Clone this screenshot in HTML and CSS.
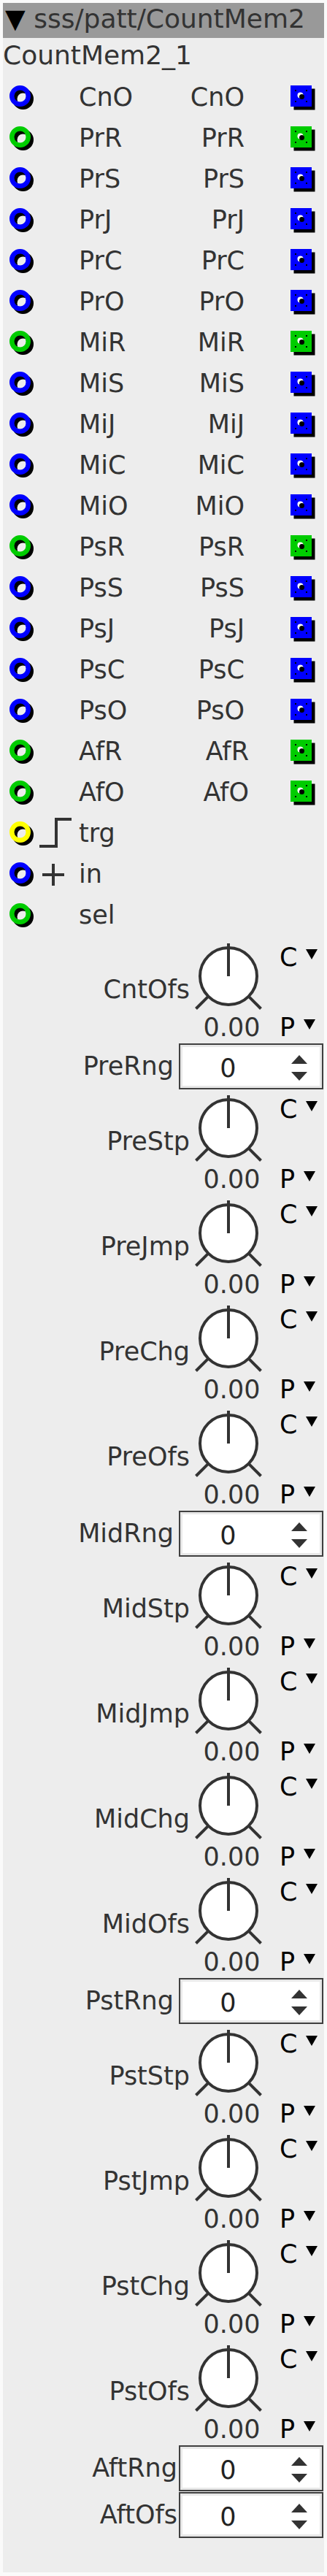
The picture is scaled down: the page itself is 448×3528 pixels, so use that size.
FILE: index.html
```html
<!DOCTYPE html>
<html>
<head>
<meta charset="utf-8">
<link rel="stylesheet" href="styles.css">
</head>
<body>
<div class="panel">
  <div class="hdr"><span class="hdr-tri">▼</span> sss/patt/CountMem2</div>
  <div class="title">CountMem2_1</div>
  <div class="ports">
    <div class="port c-b"><svg class="ring" viewBox="0 0 34 34"><circle class="sh" cx="18.5" cy="18.5" r="11.25"/><circle class="fg" cx="14.5" cy="14.5" r="11.25"/></svg><span class="sub"></span><span class="pl">CnO</span><span class="pr">CnO</span><svg class="sq" viewBox="0 0 34 34"><rect class="sh" x="4.5" y="4.5" width="29" height="29"/><rect class="fg" width="29" height="29"/><rect class="d" x="6" y="6" width="2" height="2"/><rect class="d" x="21" y="6" width="2" height="2"/><rect class="d" x="6" y="21" width="2" height="2"/><rect class="d" x="21" y="21" width="2" height="2"/><circle class="w" cx="13.5" cy="13.5" r="4"/><circle class="k" cx="15.5" cy="15.5" r="3.5"/></svg></div>
    <div class="port c-g"><svg class="ring" viewBox="0 0 34 34"><circle class="sh" cx="18.5" cy="18.5" r="11.25"/><circle class="fg" cx="14.5" cy="14.5" r="11.25"/></svg><span class="sub"></span><span class="pl">PrR</span><span class="pr">PrR</span><svg class="sq" viewBox="0 0 34 34"><rect class="sh" x="4.5" y="4.5" width="29" height="29"/><rect class="fg" width="29" height="29"/><rect class="d" x="6" y="6" width="2" height="2"/><rect class="d" x="21" y="6" width="2" height="2"/><rect class="d" x="6" y="21" width="2" height="2"/><rect class="d" x="21" y="21" width="2" height="2"/><circle class="w" cx="13.5" cy="13.5" r="4"/><circle class="k" cx="15.5" cy="15.5" r="3.5"/></svg></div>
    <div class="port c-b"><svg class="ring" viewBox="0 0 34 34"><circle class="sh" cx="18.5" cy="18.5" r="11.25"/><circle class="fg" cx="14.5" cy="14.5" r="11.25"/></svg><span class="sub"></span><span class="pl">PrS</span><span class="pr">PrS</span><svg class="sq" viewBox="0 0 34 34"><rect class="sh" x="4.5" y="4.5" width="29" height="29"/><rect class="fg" width="29" height="29"/><rect class="d" x="6" y="6" width="2" height="2"/><rect class="d" x="21" y="6" width="2" height="2"/><rect class="d" x="6" y="21" width="2" height="2"/><rect class="d" x="21" y="21" width="2" height="2"/><circle class="w" cx="13.5" cy="13.5" r="4"/><circle class="k" cx="15.5" cy="15.5" r="3.5"/></svg></div>
    <div class="port c-b"><svg class="ring" viewBox="0 0 34 34"><circle class="sh" cx="18.5" cy="18.5" r="11.25"/><circle class="fg" cx="14.5" cy="14.5" r="11.25"/></svg><span class="sub"></span><span class="pl">PrJ</span><span class="pr">PrJ</span><svg class="sq" viewBox="0 0 34 34"><rect class="sh" x="4.5" y="4.5" width="29" height="29"/><rect class="fg" width="29" height="29"/><rect class="d" x="6" y="6" width="2" height="2"/><rect class="d" x="21" y="6" width="2" height="2"/><rect class="d" x="6" y="21" width="2" height="2"/><rect class="d" x="21" y="21" width="2" height="2"/><circle class="w" cx="13.5" cy="13.5" r="4"/><circle class="k" cx="15.5" cy="15.5" r="3.5"/></svg></div>
    <div class="port c-b"><svg class="ring" viewBox="0 0 34 34"><circle class="sh" cx="18.5" cy="18.5" r="11.25"/><circle class="fg" cx="14.5" cy="14.5" r="11.25"/></svg><span class="sub"></span><span class="pl">PrC</span><span class="pr">PrC</span><svg class="sq" viewBox="0 0 34 34"><rect class="sh" x="4.5" y="4.5" width="29" height="29"/><rect class="fg" width="29" height="29"/><rect class="d" x="6" y="6" width="2" height="2"/><rect class="d" x="21" y="6" width="2" height="2"/><rect class="d" x="6" y="21" width="2" height="2"/><rect class="d" x="21" y="21" width="2" height="2"/><circle class="w" cx="13.5" cy="13.5" r="4"/><circle class="k" cx="15.5" cy="15.5" r="3.5"/></svg></div>
    <div class="port c-b"><svg class="ring" viewBox="0 0 34 34"><circle class="sh" cx="18.5" cy="18.5" r="11.25"/><circle class="fg" cx="14.5" cy="14.5" r="11.25"/></svg><span class="sub"></span><span class="pl">PrO</span><span class="pr">PrO</span><svg class="sq" viewBox="0 0 34 34"><rect class="sh" x="4.5" y="4.5" width="29" height="29"/><rect class="fg" width="29" height="29"/><rect class="d" x="6" y="6" width="2" height="2"/><rect class="d" x="21" y="6" width="2" height="2"/><rect class="d" x="6" y="21" width="2" height="2"/><rect class="d" x="21" y="21" width="2" height="2"/><circle class="w" cx="13.5" cy="13.5" r="4"/><circle class="k" cx="15.5" cy="15.5" r="3.5"/></svg></div>
    <div class="port c-g"><svg class="ring" viewBox="0 0 34 34"><circle class="sh" cx="18.5" cy="18.5" r="11.25"/><circle class="fg" cx="14.5" cy="14.5" r="11.25"/></svg><span class="sub"></span><span class="pl">MiR</span><span class="pr">MiR</span><svg class="sq" viewBox="0 0 34 34"><rect class="sh" x="4.5" y="4.5" width="29" height="29"/><rect class="fg" width="29" height="29"/><rect class="d" x="6" y="6" width="2" height="2"/><rect class="d" x="21" y="6" width="2" height="2"/><rect class="d" x="6" y="21" width="2" height="2"/><rect class="d" x="21" y="21" width="2" height="2"/><circle class="w" cx="13.5" cy="13.5" r="4"/><circle class="k" cx="15.5" cy="15.5" r="3.5"/></svg></div>
    <div class="port c-b"><svg class="ring" viewBox="0 0 34 34"><circle class="sh" cx="18.5" cy="18.5" r="11.25"/><circle class="fg" cx="14.5" cy="14.5" r="11.25"/></svg><span class="sub"></span><span class="pl">MiS</span><span class="pr">MiS</span><svg class="sq" viewBox="0 0 34 34"><rect class="sh" x="4.5" y="4.5" width="29" height="29"/><rect class="fg" width="29" height="29"/><rect class="d" x="6" y="6" width="2" height="2"/><rect class="d" x="21" y="6" width="2" height="2"/><rect class="d" x="6" y="21" width="2" height="2"/><rect class="d" x="21" y="21" width="2" height="2"/><circle class="w" cx="13.5" cy="13.5" r="4"/><circle class="k" cx="15.5" cy="15.5" r="3.5"/></svg></div>
    <div class="port c-b"><svg class="ring" viewBox="0 0 34 34"><circle class="sh" cx="18.5" cy="18.5" r="11.25"/><circle class="fg" cx="14.5" cy="14.5" r="11.25"/></svg><span class="sub"></span><span class="pl">MiJ</span><span class="pr">MiJ</span><svg class="sq" viewBox="0 0 34 34"><rect class="sh" x="4.5" y="4.5" width="29" height="29"/><rect class="fg" width="29" height="29"/><rect class="d" x="6" y="6" width="2" height="2"/><rect class="d" x="21" y="6" width="2" height="2"/><rect class="d" x="6" y="21" width="2" height="2"/><rect class="d" x="21" y="21" width="2" height="2"/><circle class="w" cx="13.5" cy="13.5" r="4"/><circle class="k" cx="15.5" cy="15.5" r="3.5"/></svg></div>
    <div class="port c-b"><svg class="ring" viewBox="0 0 34 34"><circle class="sh" cx="18.5" cy="18.5" r="11.25"/><circle class="fg" cx="14.5" cy="14.5" r="11.25"/></svg><span class="sub"></span><span class="pl">MiC</span><span class="pr">MiC</span><svg class="sq" viewBox="0 0 34 34"><rect class="sh" x="4.5" y="4.5" width="29" height="29"/><rect class="fg" width="29" height="29"/><rect class="d" x="6" y="6" width="2" height="2"/><rect class="d" x="21" y="6" width="2" height="2"/><rect class="d" x="6" y="21" width="2" height="2"/><rect class="d" x="21" y="21" width="2" height="2"/><circle class="w" cx="13.5" cy="13.5" r="4"/><circle class="k" cx="15.5" cy="15.5" r="3.5"/></svg></div>
    <div class="port c-b"><svg class="ring" viewBox="0 0 34 34"><circle class="sh" cx="18.5" cy="18.5" r="11.25"/><circle class="fg" cx="14.5" cy="14.5" r="11.25"/></svg><span class="sub"></span><span class="pl">MiO</span><span class="pr">MiO</span><svg class="sq" viewBox="0 0 34 34"><rect class="sh" x="4.5" y="4.5" width="29" height="29"/><rect class="fg" width="29" height="29"/><rect class="d" x="6" y="6" width="2" height="2"/><rect class="d" x="21" y="6" width="2" height="2"/><rect class="d" x="6" y="21" width="2" height="2"/><rect class="d" x="21" y="21" width="2" height="2"/><circle class="w" cx="13.5" cy="13.5" r="4"/><circle class="k" cx="15.5" cy="15.5" r="3.5"/></svg></div>
    <div class="port c-g"><svg class="ring" viewBox="0 0 34 34"><circle class="sh" cx="18.5" cy="18.5" r="11.25"/><circle class="fg" cx="14.5" cy="14.5" r="11.25"/></svg><span class="sub"></span><span class="pl">PsR</span><span class="pr">PsR</span><svg class="sq" viewBox="0 0 34 34"><rect class="sh" x="4.5" y="4.5" width="29" height="29"/><rect class="fg" width="29" height="29"/><rect class="d" x="6" y="6" width="2" height="2"/><rect class="d" x="21" y="6" width="2" height="2"/><rect class="d" x="6" y="21" width="2" height="2"/><rect class="d" x="21" y="21" width="2" height="2"/><circle class="w" cx="13.5" cy="13.5" r="4"/><circle class="k" cx="15.5" cy="15.5" r="3.5"/></svg></div>
    <div class="port c-b"><svg class="ring" viewBox="0 0 34 34"><circle class="sh" cx="18.5" cy="18.5" r="11.25"/><circle class="fg" cx="14.5" cy="14.5" r="11.25"/></svg><span class="sub"></span><span class="pl">PsS</span><span class="pr">PsS</span><svg class="sq" viewBox="0 0 34 34"><rect class="sh" x="4.5" y="4.5" width="29" height="29"/><rect class="fg" width="29" height="29"/><rect class="d" x="6" y="6" width="2" height="2"/><rect class="d" x="21" y="6" width="2" height="2"/><rect class="d" x="6" y="21" width="2" height="2"/><rect class="d" x="21" y="21" width="2" height="2"/><circle class="w" cx="13.5" cy="13.5" r="4"/><circle class="k" cx="15.5" cy="15.5" r="3.5"/></svg></div>
    <div class="port c-b"><svg class="ring" viewBox="0 0 34 34"><circle class="sh" cx="18.5" cy="18.5" r="11.25"/><circle class="fg" cx="14.5" cy="14.5" r="11.25"/></svg><span class="sub"></span><span class="pl">PsJ</span><span class="pr">PsJ</span><svg class="sq" viewBox="0 0 34 34"><rect class="sh" x="4.5" y="4.5" width="29" height="29"/><rect class="fg" width="29" height="29"/><rect class="d" x="6" y="6" width="2" height="2"/><rect class="d" x="21" y="6" width="2" height="2"/><rect class="d" x="6" y="21" width="2" height="2"/><rect class="d" x="21" y="21" width="2" height="2"/><circle class="w" cx="13.5" cy="13.5" r="4"/><circle class="k" cx="15.5" cy="15.5" r="3.5"/></svg></div>
    <div class="port c-b"><svg class="ring" viewBox="0 0 34 34"><circle class="sh" cx="18.5" cy="18.5" r="11.25"/><circle class="fg" cx="14.5" cy="14.5" r="11.25"/></svg><span class="sub"></span><span class="pl">PsC</span><span class="pr">PsC</span><svg class="sq" viewBox="0 0 34 34"><rect class="sh" x="4.5" y="4.5" width="29" height="29"/><rect class="fg" width="29" height="29"/><rect class="d" x="6" y="6" width="2" height="2"/><rect class="d" x="21" y="6" width="2" height="2"/><rect class="d" x="6" y="21" width="2" height="2"/><rect class="d" x="21" y="21" width="2" height="2"/><circle class="w" cx="13.5" cy="13.5" r="4"/><circle class="k" cx="15.5" cy="15.5" r="3.5"/></svg></div>
    <div class="port c-b"><svg class="ring" viewBox="0 0 34 34"><circle class="sh" cx="18.5" cy="18.5" r="11.25"/><circle class="fg" cx="14.5" cy="14.5" r="11.25"/></svg><span class="sub"></span><span class="pl">PsO</span><span class="pr">PsO</span><svg class="sq" viewBox="0 0 34 34"><rect class="sh" x="4.5" y="4.5" width="29" height="29"/><rect class="fg" width="29" height="29"/><rect class="d" x="6" y="6" width="2" height="2"/><rect class="d" x="21" y="6" width="2" height="2"/><rect class="d" x="6" y="21" width="2" height="2"/><rect class="d" x="21" y="21" width="2" height="2"/><circle class="w" cx="13.5" cy="13.5" r="4"/><circle class="k" cx="15.5" cy="15.5" r="3.5"/></svg></div>
    <div class="port c-g"><svg class="ring" viewBox="0 0 34 34"><circle class="sh" cx="18.5" cy="18.5" r="11.25"/><circle class="fg" cx="14.5" cy="14.5" r="11.25"/></svg><span class="sub"></span><span class="pl">AfR</span><span class="pr af">AfR</span><svg class="sq" viewBox="0 0 34 34"><rect class="sh" x="4.5" y="4.5" width="29" height="29"/><rect class="fg" width="29" height="29"/><rect class="d" x="6" y="6" width="2" height="2"/><rect class="d" x="21" y="6" width="2" height="2"/><rect class="d" x="6" y="21" width="2" height="2"/><rect class="d" x="21" y="21" width="2" height="2"/><circle class="w" cx="13.5" cy="13.5" r="4"/><circle class="k" cx="15.5" cy="15.5" r="3.5"/></svg></div>
    <div class="port c-g"><svg class="ring" viewBox="0 0 34 34"><circle class="sh" cx="18.5" cy="18.5" r="11.25"/><circle class="fg" cx="14.5" cy="14.5" r="11.25"/></svg><span class="sub"></span><span class="pl">AfO</span><span class="pr af">AfO</span><svg class="sq" viewBox="0 0 34 34"><rect class="sh" x="4.5" y="4.5" width="29" height="29"/><rect class="fg" width="29" height="29"/><rect class="d" x="6" y="6" width="2" height="2"/><rect class="d" x="21" y="6" width="2" height="2"/><rect class="d" x="6" y="21" width="2" height="2"/><rect class="d" x="21" y="21" width="2" height="2"/><circle class="w" cx="13.5" cy="13.5" r="4"/><circle class="k" cx="15.5" cy="15.5" r="3.5"/></svg></div>
    <div class="port c-y"><svg class="ring" viewBox="0 0 34 34"><circle class="sh" cx="18.5" cy="18.5" r="11.25"/><circle class="fg" cx="14.5" cy="14.5" r="11.25"/></svg><span class="sub"><svg class="step" viewBox="0 0 44 44"><polyline points="0,40 23,40 23,3 44,3"/></svg></span><span class="pl">trg</span></div>
    <div class="port c-b"><svg class="ring" viewBox="0 0 34 34"><circle class="sh" cx="18.5" cy="18.5" r="11.25"/><circle class="fg" cx="14.5" cy="14.5" r="11.25"/></svg><span class="sub"><svg class="plus" viewBox="0 0 30 30"><path d="M0 15H30M15 0V30"/></svg></span><span class="pl">in</span></div>
    <div class="port c-g"><svg class="ring" viewBox="0 0 34 34"><circle class="sh" cx="18.5" cy="18.5" r="11.25"/><circle class="fg" cx="14.5" cy="14.5" r="11.25"/></svg><span class="sub"></span><span class="pl">sel</span></div>
  </div>
  <div class="ctrls">
    <div class="knob"><div class="kl">CntOfs</div><svg class="kn" viewBox="0 0 104 100"><circle cx="51" cy="52" r="39"/><line x1="51" y1="7" x2="51" y2="52"/><line x1="23.4" y1="79.6" x2="6.5" y2="96.5"/><line x1="78.6" y1="79.6" x2="95.5" y2="96.5"/></svg><div class="ks">C<i class="tri"></i></div><div class="kv">0.00</div><div class="ks2">P<i class="tri"></i></div></div>
    <div class="spin"><div class="sl">PreRng</div><div class="sb"><span class="sv">0</span><span class="sa"><i class="up"></i><i class="dn"></i></span></div></div>
    <div class="knob"><div class="kl">PreStp</div><svg class="kn" viewBox="0 0 104 100"><circle cx="51" cy="52" r="39"/><line x1="51" y1="7" x2="51" y2="52"/><line x1="23.4" y1="79.6" x2="6.5" y2="96.5"/><line x1="78.6" y1="79.6" x2="95.5" y2="96.5"/></svg><div class="ks">C<i class="tri"></i></div><div class="kv">0.00</div><div class="ks2">P<i class="tri"></i></div></div>
    <div class="knob"><div class="kl">PreJmp</div><svg class="kn" viewBox="0 0 104 100"><circle cx="51" cy="52" r="39"/><line x1="51" y1="7" x2="51" y2="52"/><line x1="23.4" y1="79.6" x2="6.5" y2="96.5"/><line x1="78.6" y1="79.6" x2="95.5" y2="96.5"/></svg><div class="ks">C<i class="tri"></i></div><div class="kv">0.00</div><div class="ks2">P<i class="tri"></i></div></div>
    <div class="knob"><div class="kl">PreChg</div><svg class="kn" viewBox="0 0 104 100"><circle cx="51" cy="52" r="39"/><line x1="51" y1="7" x2="51" y2="52"/><line x1="23.4" y1="79.6" x2="6.5" y2="96.5"/><line x1="78.6" y1="79.6" x2="95.5" y2="96.5"/></svg><div class="ks">C<i class="tri"></i></div><div class="kv">0.00</div><div class="ks2">P<i class="tri"></i></div></div>
    <div class="knob"><div class="kl">PreOfs</div><svg class="kn" viewBox="0 0 104 100"><circle cx="51" cy="52" r="39"/><line x1="51" y1="7" x2="51" y2="52"/><line x1="23.4" y1="79.6" x2="6.5" y2="96.5"/><line x1="78.6" y1="79.6" x2="95.5" y2="96.5"/></svg><div class="ks">C<i class="tri"></i></div><div class="kv">0.00</div><div class="ks2">P<i class="tri"></i></div></div>
    <div class="spin"><div class="sl">MidRng</div><div class="sb"><span class="sv">0</span><span class="sa"><i class="up"></i><i class="dn"></i></span></div></div>
    <div class="knob"><div class="kl">MidStp</div><svg class="kn" viewBox="0 0 104 100"><circle cx="51" cy="52" r="39"/><line x1="51" y1="7" x2="51" y2="52"/><line x1="23.4" y1="79.6" x2="6.5" y2="96.5"/><line x1="78.6" y1="79.6" x2="95.5" y2="96.5"/></svg><div class="ks">C<i class="tri"></i></div><div class="kv">0.00</div><div class="ks2">P<i class="tri"></i></div></div>
    <div class="knob"><div class="kl">MidJmp</div><svg class="kn" viewBox="0 0 104 100"><circle cx="51" cy="52" r="39"/><line x1="51" y1="7" x2="51" y2="52"/><line x1="23.4" y1="79.6" x2="6.5" y2="96.5"/><line x1="78.6" y1="79.6" x2="95.5" y2="96.5"/></svg><div class="ks">C<i class="tri"></i></div><div class="kv">0.00</div><div class="ks2">P<i class="tri"></i></div></div>
    <div class="knob"><div class="kl">MidChg</div><svg class="kn" viewBox="0 0 104 100"><circle cx="51" cy="52" r="39"/><line x1="51" y1="7" x2="51" y2="52"/><line x1="23.4" y1="79.6" x2="6.5" y2="96.5"/><line x1="78.6" y1="79.6" x2="95.5" y2="96.5"/></svg><div class="ks">C<i class="tri"></i></div><div class="kv">0.00</div><div class="ks2">P<i class="tri"></i></div></div>
    <div class="knob"><div class="kl">MidOfs</div><svg class="kn" viewBox="0 0 104 100"><circle cx="51" cy="52" r="39"/><line x1="51" y1="7" x2="51" y2="52"/><line x1="23.4" y1="79.6" x2="6.5" y2="96.5"/><line x1="78.6" y1="79.6" x2="95.5" y2="96.5"/></svg><div class="ks">C<i class="tri"></i></div><div class="kv">0.00</div><div class="ks2">P<i class="tri"></i></div></div>
    <div class="spin"><div class="sl">PstRng</div><div class="sb"><span class="sv">0</span><span class="sa"><i class="up"></i><i class="dn"></i></span></div></div>
    <div class="knob"><div class="kl">PstStp</div><svg class="kn" viewBox="0 0 104 100"><circle cx="51" cy="52" r="39"/><line x1="51" y1="7" x2="51" y2="52"/><line x1="23.4" y1="79.6" x2="6.5" y2="96.5"/><line x1="78.6" y1="79.6" x2="95.5" y2="96.5"/></svg><div class="ks">C<i class="tri"></i></div><div class="kv">0.00</div><div class="ks2">P<i class="tri"></i></div></div>
    <div class="knob"><div class="kl">PstJmp</div><svg class="kn" viewBox="0 0 104 100"><circle cx="51" cy="52" r="39"/><line x1="51" y1="7" x2="51" y2="52"/><line x1="23.4" y1="79.6" x2="6.5" y2="96.5"/><line x1="78.6" y1="79.6" x2="95.5" y2="96.5"/></svg><div class="ks">C<i class="tri"></i></div><div class="kv">0.00</div><div class="ks2">P<i class="tri"></i></div></div>
    <div class="knob"><div class="kl">PstChg</div><svg class="kn" viewBox="0 0 104 100"><circle cx="51" cy="52" r="39"/><line x1="51" y1="7" x2="51" y2="52"/><line x1="23.4" y1="79.6" x2="6.5" y2="96.5"/><line x1="78.6" y1="79.6" x2="95.5" y2="96.5"/></svg><div class="ks">C<i class="tri"></i></div><div class="kv">0.00</div><div class="ks2">P<i class="tri"></i></div></div>
    <div class="knob"><div class="kl">PstOfs</div><svg class="kn" viewBox="0 0 104 100"><circle cx="51" cy="52" r="39"/><line x1="51" y1="7" x2="51" y2="52"/><line x1="23.4" y1="79.6" x2="6.5" y2="96.5"/><line x1="78.6" y1="79.6" x2="95.5" y2="96.5"/></svg><div class="ks">C<i class="tri"></i></div><div class="kv">0.00</div><div class="ks2">P<i class="tri"></i></div></div>
    <div class="spin"><div class="sl af">AftRng</div><div class="sb"><span class="sv">0</span><span class="sa"><i class="up"></i><i class="dn"></i></span></div></div>
    <div class="spin"><div class="sl af">AftOfs</div><div class="sb"><span class="sv">0</span><span class="sa"><i class="up"></i><i class="dn"></i></span></div></div>
  </div>
</div>
</body>
</html>
```

FILE: styles.css
```css
* { box-sizing: border-box; }
html, body { margin: 0; padding: 0; }
body {
  background: #fafafa;
  padding: 4px;
  font-family: "DejaVu Sans", "Liberation Sans", sans-serif;
  font-size: 35px;
  color: #333;
}
.panel {
  width: 440px;
  background: #ededed;
  padding-bottom: 46px;
}
.hdr {
  height: 48px;
  background: #999;
  font-size: 36px;
  line-height: 42px;
  padding: 1px 0 0 3px;
  white-space: nowrap;
  overflow: hidden;
}
.hdr-tri { color: #000; }
.title {
  height: 53px;
  font-size: 36px;
  line-height: 48px;
  white-space: nowrap;
}
.port {
  display: grid;
  grid-template-columns: 46px 58px 1fr auto 109px;
  height: 56px;
  line-height: 56px;
  align-items: start;
}
.c-b { color: #0000ff; }
.c-g { color: #00cc00; }
.c-y { color: #ffff00; }
.ring {
  width: 34px;
  height: 34px;
  margin: 12px 0 0 9px;
}
.ring circle { fill: none; stroke-width: 6.5; }
.ring .sh { stroke: #000; }
.ring .fg { stroke: currentColor; }
.sub { height: 56px; }
.step {
  width: 44px;
  height: 44px;
  margin: 6px 0 0 4px;
}
.step polyline { fill: none; stroke: #333; stroke-width: 4; stroke-linecap: butt; }
.plus {
  width: 30px;
  height: 30px;
  margin: 14px 0 0 8px;
}
.plus path { stroke: #333; stroke-width: 4; fill: none; }
.pl, .pr { color: #333; white-space: nowrap; }
.pr { text-align: right; }
.pr.af { margin-right: -6px; }
.sq {
  width: 34px;
  height: 34px;
  margin: 12px 0 0 63px;
}
.sq .sh { fill: #000; }
.sq .fg { fill: currentColor; }
.sq .d { fill: #000; }
.sq .w { fill: #fff; }
.sq .k { fill: #000; }

.ctrls { margin-top: 4px; }
.knob {
  display: grid;
  grid-template-columns: 258px 104px 78px;
  grid-template-rows: 100px 44px;
  line-height: 40px;
}
.kl {
  grid-row: 1;
  grid-column: 1;
  text-align: right;
  padding: 50px 2px 0 0;
  white-space: nowrap;
}
.kn {
  grid-row: 1;
  grid-column: 2;
  width: 104px;
  height: 100px;
}
.kn circle { fill: #fff; stroke: #333; stroke-width: 4; }
.kn line { stroke: #333; stroke-width: 4; }
.ks, .ks2 {
  display: flex;
  align-items: flex-start;
  color: #000;
  padding-left: 17px;
}
.ks { grid-row: 1; grid-column: 3; padding-top: 6px; }
.ks2 { grid-row: 2; grid-column: 3; padding-top: 2px; }
.tri {
  width: 0;
  height: 0;
  border-left: 8.5px solid transparent;
  border-right: 8.5px solid transparent;
  border-top: 14px solid #000;
  margin: 9px 0 0 12px;
}
.kv {
  grid-row: 2;
  grid-column: 2;
  text-align: center;
  padding: 2px 0 0 7px;
  white-space: nowrap;
}
.spin {
  display: grid;
  grid-template-columns: 241px 198px;
  height: 64px;
  line-height: 40px;
}
.sl {
  text-align: right;
  padding: 11px 7px 0 0;
  white-space: nowrap;
}
.sl.af { margin-right: -5px; }
.sb {
  height: 63px;
  border: 2px solid #404040;
  background: #fff;
  box-shadow: inset 0 0 0 3px #e8e8e8;
  display: flex;
}
.sv {
  flex: 1;
  text-align: center;
  padding-top: 12px;
  color: #222;
}
.sa {
  width: 63px;
  display: flex;
  flex-direction: column;
  align-items: center;
  padding-top: 14px;
  gap: 11px;
}
.up, .dn {
  width: 0;
  height: 0;
  border-left: 11.5px solid transparent;
  border-right: 11.5px solid transparent;
}
.up { border-bottom: 12px solid #333; }
.dn { border-top: 12px solid #333; }
```
